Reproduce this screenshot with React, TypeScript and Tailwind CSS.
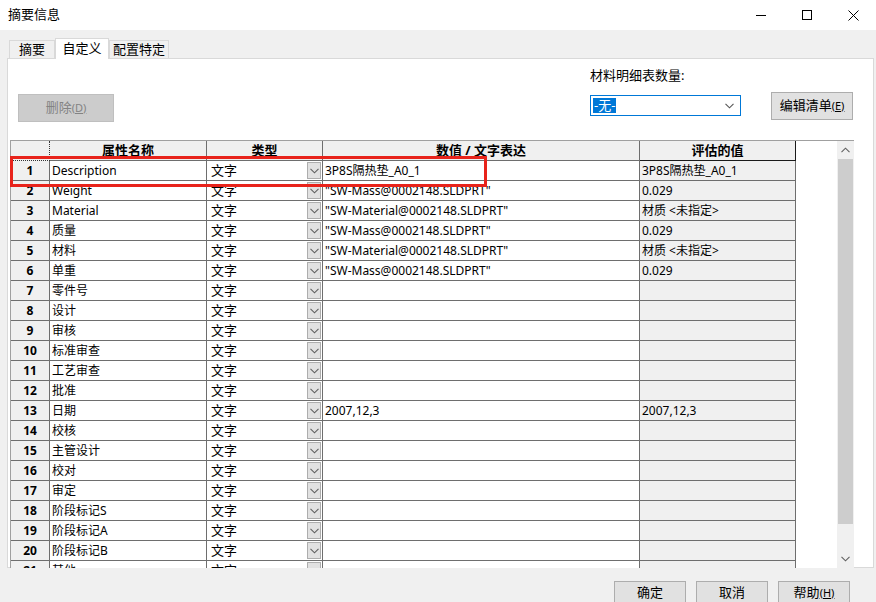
import React from "react";

const FONT = { fontFamily: '"Noto Sans", "Noto Sans CJK SC", sans-serif' };

type Row = [string, string, string, string];

const rows: Row[] = [
  ["1", "Description", "3P8S隔热垫_A0_1", "3P8S隔热垫_A0_1"],
  ["2", "Weight", '"SW-Mass@0002148.SLDPRT"', "0.029"],
  ["3", "Material", '"SW-Material@0002148.SLDPRT"', "材质 <未指定>"],
  ["4", "质量", '"SW-Mass@0002148.SLDPRT"', "0.029"],
  ["5", "材料", '"SW-Material@0002148.SLDPRT"', "材质 <未指定>"],
  ["6", "单重", '"SW-Mass@0002148.SLDPRT"', "0.029"],
  ["7", "零件号", "", ""],
  ["8", "设计", "", ""],
  ["9", "审核", "", ""],
  ["10", "标准审查", "", ""],
  ["11", "工艺审查", "", ""],
  ["12", "批准", "", ""],
  ["13", "日期", "2007,12,3", "2007,12,3"],
  ["14", "校核", "", ""],
  ["15", "主管设计", "", ""],
  ["16", "校对", "", ""],
  ["17", "审定", "", ""],
  ["18", "阶段标记S", "", ""],
  ["19", "阶段标记A", "", ""],
  ["20", "阶段标记B", "", ""],
  ["21", "其他", "", ""],
];

function Chevron({ className = "" }: { className?: string }) {
  return (
    <svg width="9" height="6" viewBox="0 0 9 6" className={className}>
      <path d="M0.5 0.8 L4.5 4.8 L8.5 0.8" fill="none" stroke="currentColor" strokeWidth="1.1" />
    </svg>
  );
}

function Btn({ children, className = "" }: { children: React.ReactNode; className?: string }) {
  return (
    <div
      className={
        "flex items-center justify-center border border-[#adadad] bg-[#e1e1e1] text-[13px] text-black " +
        className
      }
    >
      {children}
    </div>
  );
}

function GridRow({ r }: { r: Row }) {
  return (
    <div className="flex h-[20px] shrink-0 text-[12px] leading-[19px]">
      <div className="w-[39px] shrink-0 border-b border-r border-[#6e6e6e] bg-[#f0f0f0] text-center font-bold">
        {r[0]}
      </div>
      <div className="w-[157px] shrink-0 border-b border-r border-[#6e6e6e] bg-white pl-[2px]">{r[1]}</div>
      <div className="flex w-[116px] shrink-0 items-center justify-between border-b border-r border-[#6e6e6e] bg-white pl-[4px] pr-[1px]">
        <span className="text-[13px]">文字</span>
        <div className="flex h-[17px] w-[14px] items-center justify-center border border-[#adadad] bg-[#e1e1e1] text-[#606060]">
          <Chevron />
        </div>
      </div>
      <div className="w-[317px] shrink-0 border-b border-r border-[#6e6e6e] bg-white pl-[2px]">{r[2]}</div>
      <div className="w-[156px] shrink-0 border-b border-r border-[#6e6e6e] bg-[#f0f0f0] pl-[2px]">{r[3]}</div>
      <div className="flex-1 bg-white" />
    </div>
  );
}

export default function App() {
  return (
    <div className="relative flex h-[602px] w-[876px] flex-col overflow-hidden bg-[#f0f0f0] text-black" style={FONT}>
      {/* title bar */}
      <div className="flex h-[30px] shrink-0 items-center bg-white">
        <span className="pl-[8px] text-[13px]">摘要信息</span>
        <div className="ml-auto flex h-full items-center">
          <div className="flex h-full w-[46px] items-center justify-center">
            <div className="h-px w-[10px] bg-black" />
          </div>
          <div className="flex h-full w-[46px] items-center justify-center">
            <div className="h-[10px] w-[10px] border border-black" />
          </div>
          <div className="flex h-full w-[46px] items-center justify-center">
            <svg width="11" height="11" viewBox="0 0 11 11">
              <path d="M0.5 0.5 L10.5 10.5 M10.5 0.5 L0.5 10.5" stroke="black" strokeWidth="1" />
            </svg>
          </div>
        </div>
      </div>

      {/* tabs */}
      <div className="flex h-[28px] shrink-0 items-end pl-[9px]">
        <div className="flex h-[18px] w-[46px] items-center justify-center border border-b-0 border-[#d9d9d9] text-[13px]">
          摘要
        </div>
        <div className="relative z-10 -mb-px flex h-[21px] w-[54px] items-center justify-center border border-b-0 border-[#d9d9d9] bg-white text-[13px]">
          自定义
        </div>
        <div className="flex h-[18px] w-[60px] items-center justify-center border border-b-0 border-[#d9d9d9] text-[13px]">
          配置特定
        </div>
      </div>

      {/* panel */}
      <div className="ml-[7px] mr-[2px] flex h-[510px] shrink-0 flex-col border border-[#d9d9d9] bg-white">
        <div className="flex h-[81px] shrink-0">
          <div className="pl-[10px] pt-[35px]">
            <div className="flex h-[28px] w-[96px] items-center justify-center border border-[#bfbfbf] bg-[#cccccc] text-[13px] text-[#838383]">
              删除<span className="text-[11px] underline">(D)</span>
            </div>
          </div>
          <div className="ml-[476px] flex flex-col pt-[8px]">
            <span className="text-[13px] leading-[16px]">材料明细表数量:</span>
            <div className="mt-[6px] flex items-start">
              <div className="mt-[6px] flex h-[21px] w-[151px] items-center justify-between border border-[#0078d7] bg-white pl-[2px] pr-[6px]">
                <span className="bg-[#0078d7] px-px text-[13px] leading-[15px] text-white">-无-</span>
                <Chevron className="text-[#555]" />
              </div>
              <Btn className="ml-[30px] mt-[3px] h-[28px] w-[82px]">
                编辑清单<span className="text-[11px] underline">(E)</span>
              </Btn>
            </div>
          </div>
        </div>

        {/* grid */}
        <div className="ml-[2px] flex h-[428px] w-[844px] border-l border-t border-[#a0a0a0]">
          <div className="flex flex-1 flex-col overflow-hidden">
            <div className="flex h-[20px] shrink-0 text-[13px] font-bold leading-[19px]">
              <div className="w-[39px] shrink-0 border-b border-r border-dotted border-[#333] bg-[#f0f0f0]" />
              <div className="w-[157px] shrink-0 border-b border-r border-[#6e6e6e] bg-[#f0f0f0] text-center">属性名称</div>
              <div className="w-[116px] shrink-0 border-b border-r border-[#6e6e6e] bg-[#f0f0f0] text-center">类型</div>
              <div className="w-[317px] shrink-0 border-b border-r border-[#6e6e6e] bg-[#f0f0f0] text-center">数值 / 文字表达</div>
              <div className="w-[156px] shrink-0 border-b border-r border-[#1a1a1a] bg-[#f0f0f0] text-center">评估的值</div>
              <div className="flex-1 bg-white" />
            </div>
            {rows.map((r) => (
              <GridRow key={r[0]} r={r} />
            ))}
          </div>
          <div className="flex w-[17px] shrink-0 flex-col bg-[#f0f0f0]">
            <div className="flex h-[18px] items-center justify-center text-[#606060]">
              <Chevron className="rotate-180" />
            </div>
            <div className="mx-px h-[365px] bg-[#cdcdcd]" />
            <div className="flex-1" />
            <div className="flex h-[18px] items-center justify-center text-[#606060]">
              <Chevron />
            </div>
          </div>
        </div>
      </div>

      {/* bottom buttons */}
      <div className="flex justify-end gap-[10px] pr-[26px] pt-[13px]">
        <Btn className="h-[24px] w-[72px]">确定</Btn>
        <Btn className="h-[24px] w-[72px]">取消</Btn>
        <Btn className="h-[24px] w-[72px]">
          帮助<span className="text-[11px] underline">(H)</span>
        </Btn>
      </div>

      {/* red highlight */}
      <div className="pointer-events-none absolute left-[10px] top-[156px] h-[31px] w-[477px] border-[3px] border-[#e8231b]" />
    </div>
  );
}
